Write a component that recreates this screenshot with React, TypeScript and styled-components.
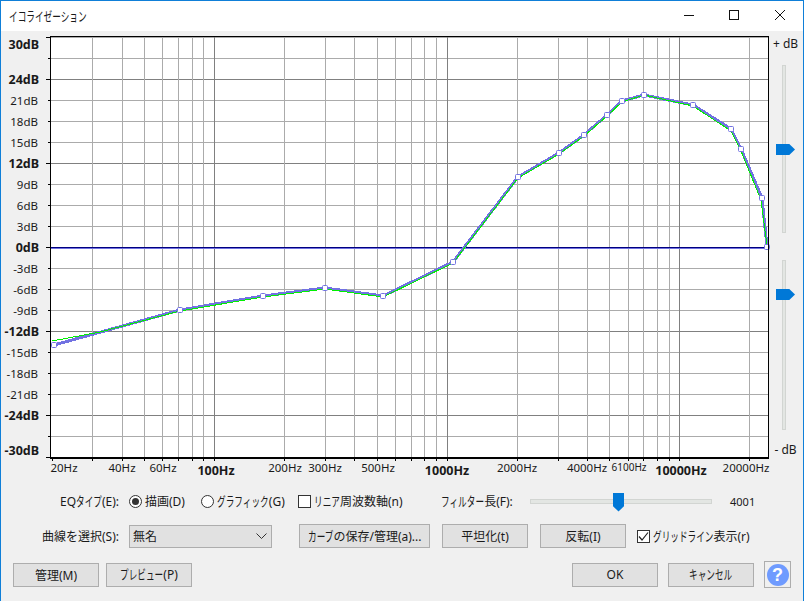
import React from "react";
import styled, { createGlobalStyle } from "styled-components";

const GlobalStyle = createGlobalStyle`
  html, body {
    margin: 0;
    padding: 0;
    background: #f0f0f0;
  }
  * {
    box-sizing: border-box;
  }
`;

const Window = styled.div`
  width: 804px;
  height: 601px;
  display: flex;
  flex-direction: column;
  background: #f0f0f0;
  border: 1px solid #0f7fd8;
  border-bottom: 0;
  overflow: hidden;
  font-family: "Noto Sans", "Noto Sans CJK JP", sans-serif;
  font-size: 12px;
  color: #1a1a1a;
`;

// the dialog font has narrow kana, so kana runs get squeezed horizontally
const Kana = styled.span<{ $n: number }>`
  display: inline-block;
  width: ${(p) => (p.$n * 8.64).toFixed(2)}px;
  font-size: 13px;
  line-height: 1;
  white-space: nowrap;
  transform: scaleX(0.665);
  transform-origin: left center;
`;

const TitleBar = styled.header`
  height: 30px;
  flex: none;
  display: flex;
  align-items: center;
  background: #fff;
`;

const Title = styled.span`
  margin-left: 8px;
  margin-right: auto;
`;

const WinButton = styled.div<{ $w: number }>`
  width: ${(p) => p.$w}px;
  height: 28px;
  align-self: flex-start;
  display: flex;
  align-items: center;
  justify-content: center;
`;

const Main = styled.div`
  flex: none;
  height: 450px;
  display: flex;
`;

const Chart = styled.svg`
  display: block;
  width: 770px;
  height: 450px;
  font-family: "Noto Sans", sans-serif;
`;

const GainColumn = styled.div`
  width: 32px;
  display: flex;
  flex-direction: column;
  align-items: flex-start;
  padding-top: 5px;
`;

const DbLabel = styled.div<{ $mt?: number }>`
  width: 32px;
  height: 16px;
  margin-top: ${(p) => p.$mt ?? 0}px;
  line-height: 16px;
  text-align: center;
  font-size: 12px;
  padding-right: 3px;
`;

const VTrack = styled.div<{ $h: number; $mt: number }>`
  position: relative;
  width: 4px;
  height: ${(p) => p.$h}px;
  margin-top: ${(p) => p.$mt}px;
  margin-left: 11px;
  background: #e3e6e3;
  border: 1px solid #d2d5d2;
`;

const VThumb = styled.div<{ $top: number }>`
  position: absolute;
  left: -7px;
  top: ${(p) => p.$top}px;
  width: 19px;
  height: 11px;
  background: #0078d7;
  clip-path: polygon(0 0, 70% 0, 100% 50%, 70% 100%, 0 100%);
`;

const Row = styled.div<{ $h: number; $mt?: number }>`
  flex: none;
  display: flex;
  align-items: center;
  height: ${(p) => p.$h}px;
  margin-top: ${(p) => p.$mt ?? 0}px;
  white-space: nowrap;
`;

const FieldLabel = styled.div<{ $w: number; $left?: boolean }>`
  flex: none;
  width: ${(p) => p.$w}px;
  text-align: ${(p) => (p.$left ? "left" : "right")};
`;

const Option = styled.label<{ $w?: number; $ml?: number }>`
  flex: none;
  display: flex;
  align-items: center;
  gap: 3px;
  width: ${(p) => (p.$w ? `${p.$w}px` : "auto")};
  margin-left: ${(p) => p.$ml ?? 0}px;
`;

const Radio = styled.input.attrs({ type: "radio", readOnly: true })`
  appearance: none;
  flex: none;
  width: 13px;
  height: 13px;
  margin: 0;
  border: 1px solid #333;
  border-radius: 50%;
  background: #fff;
  display: flex;
  align-items: center;
  justify-content: center;
  &:checked::after {
    content: "";
    width: 7px;
    height: 7px;
    border-radius: 50%;
    background: #333;
  }
`;

const CheckBox = styled.span`
  flex: none;
  width: 13px;
  height: 13px;
  border: 1px solid #333;
  background: #fff;
  display: flex;
  align-items: center;
  justify-content: center;
`;

const HTrack = styled.div`
  position: relative;
  flex: none;
  width: 182px;
  height: 5px;
  background: #e3e6e3;
  border: 1px solid #d2d5d2;
`;

const HThumb = styled.div`
  position: absolute;
  left: 82px;
  top: -7px;
  width: 11px;
  height: 19px;
  background: #0078d7;
  clip-path: polygon(0 0, 100% 0, 100% 72%, 50% 100%, 0 72%);
`;

const Value = styled.div`
  margin-left: 18px;
  font-size: 11px;
`;

const Button = styled.div<{ $w?: number; $ml?: number }>`
  flex: none;
  width: ${(p) => p.$w ?? 86}px;
  height: 24px;
  margin-left: ${(p) => p.$ml ?? 0}px;
  display: flex;
  align-items: center;
  justify-content: center;
  background: #e1e1e1;
  border: 1px solid #adadad;
`;

const Select = styled.div`
  flex: none;
  width: 143px;
  height: 23px;
  margin-left: 10px;
  padding: 0 4px 0 3px;
  display: flex;
  align-items: center;
  justify-content: space-between;
  background: #e1e1e1;
  border: 1px solid #adadad;
`;

const HelpButton = styled.div`
  flex: none;
  width: 27px;
  height: 27px;
  margin-left: 10px;
  margin-right: 12px;
  display: flex;
  align-items: center;
  justify-content: center;
  border: 1px solid #adadad;
  background: #f0f0f0;
`;

const HelpDisc = styled.div`
  width: 22px;
  height: 22px;
  border-radius: 50%;
  background: #6f9bff;
  color: #fff;
  font-family: "Liberation Sans", sans-serif;
  font-weight: 700;
  font-size: 18px;
  line-height: 22px;
  text-align: center;
`;

const Spacer = styled.div`
  margin-left: auto;
`;

const X0 = 51;
const X1 = 768;
const Y0 = 37;
const Y1 = 457;

const xOf = (hz: number) => 52 + Math.log10(hz / 20) * 232.6;
const minorHz = [30, 40, 50, 60, 70, 80, 90, 200, 300, 400, 500, 600, 700, 800, 900, 2000, 3000, 4000, 5000, 6000, 7000, 8000, 9000, 20000];
const majorHz = [100, 1000, 10000];

const dbLevels = Array.from({ length: 21 }, (_, i) => 30 - i * 3);
const yOf = (db: number) => 247 - db * 7;
const majorDb = [24, 12, -12, -24];
const longTickDb = [30, 24, 12, 0, -12, -24, -30];

const dbLabels: { db: number; text: string; bold?: boolean; y?: number }[] = [
  { db: 30, text: "30dB", bold: true, y: 44 },
  { db: 24, text: "24dB", bold: true },
  { db: 21, text: "21dB" },
  { db: 18, text: "18dB" },
  { db: 15, text: "15dB" },
  { db: 12, text: "12dB", bold: true },
  { db: 9, text: "9dB" },
  { db: 6, text: "6dB" },
  { db: 3, text: "3dB" },
  { db: 0, text: "0dB", bold: true },
  { db: -3, text: "-3dB" },
  { db: -6, text: "-6dB" },
  { db: -9, text: "-9dB" },
  { db: -12, text: "-12dB", bold: true },
  { db: -15, text: "-15dB" },
  { db: -18, text: "-18dB" },
  { db: -21, text: "-21dB" },
  { db: -24, text: "-24dB", bold: true },
  { db: -30, text: "-30dB", bold: true, y: 450 },
];

const hzLabels: { x: number; text: string; bold?: boolean; size?: number }[] = [
  { x: 64, text: "20Hz" },
  { x: 122, text: "40Hz" },
  { x: 163, text: "60Hz" },
  { x: 216, text: "100Hz", bold: true },
  { x: 285, text: "200Hz" },
  { x: 325, text: "300Hz" },
  { x: 378, text: "500Hz" },
  { x: 447, text: "1000Hz", bold: true },
  { x: 517, text: "2000Hz" },
  { x: 587, text: "4000Hz" },
  { x: 629, text: "6100Hz", size: 10 },
  { x: 681, text: "10000Hz", bold: true },
  { x: 746, text: "20000Hz" },
];

const points: [number, number][] = [
  [54, 345], [180, 310], [263, 296], [325, 288], [383, 296], [453, 262], [518, 177],
  [559, 153], [584, 135], [607, 115], [622, 101], [644, 95], [693, 105], [731, 129],
  [741, 149], [762, 198], [767, 247],
];

const greenLine: [number, number][] = [
  [52, 341], [100, 332], [180, 311], [263, 297], [325, 289], [383, 297], [453, 263], [518, 178],
  [559, 154], [584, 136], [607, 116], [622, 102], [644, 95], [693, 106], [731, 131],
  [741, 151], [761, 200], [767, 246],
];

const toPath = (pts: [number, number][]) => pts.map(([x, y]) => `${x},${y}`).join(" ");

const EqChart = () => (
  <Chart viewBox="1 31 770 450">
    <rect x={X0} y={Y0} width={X1 - X0} height={Y1 - Y0} fill="#fff" />

    <g shapeRendering="crispEdges" strokeWidth={1}>
      {dbLevels.map((db) => (
        <line
          key={db}
          x1={X0}
          x2={X1}
          y1={yOf(db) + 0.5}
          y2={yOf(db) + 0.5}
          stroke={majorDb.includes(db) ? "#808080" : "#ababab"}
        />
      ))}
      {minorHz.map((hz) => (
        <line key={hz} x1={xOf(hz)} x2={xOf(hz)} y1={Y0} y2={Y1} stroke="#ababab" />
      ))}
      {majorHz.map((hz) => (
        <line key={hz} x1={xOf(hz)} x2={xOf(hz)} y1={Y0} y2={Y1} stroke="#808080" />
      ))}
    </g>

    <g shapeRendering="crispEdges" fill="none">
      <line x1={X0} x2={X1} y1={247.5} y2={247.5} stroke="#00007f" />
      <line x1={X0} x2={X1} y1={248.5} y2={248.5} stroke="#7070e0" />
      <polyline points={toPath(points)} stroke="#7272e2" strokeWidth={3} />
      <polyline points={toPath(greenLine)} stroke="#00f000" strokeWidth={1} />
    </g>

    {points.map(([x, y]) => (
      <rect
        key={x}
        x={x - 2.5}
        y={y - 2.5}
        width={5}
        height={5}
        rx={1}
        fill="#fff"
        stroke="#7272e2"
        strokeWidth={1}
      />
    ))}

    <rect
      x={X0 - 0.5}
      y={36.5}
      width={X1 - X0 + 1}
      height={Y1 - 36 + 0.5}
      fill="none"
      stroke="#000"
      strokeWidth={1.5}
      shapeRendering="crispEdges"
    />

    <g shapeRendering="crispEdges" stroke="#000">
      {dbLevels.map((db) => (
        <line
          key={db}
          x1={longTickDb.includes(db) ? 46 : 48}
          x2={50}
          y1={yOf(db) + 0.5}
          y2={yOf(db) + 0.5}
        />
      ))}
      {[52, ...minorHz.filter((hz) => hz < 20000).map(xOf), ...majorHz.map(xOf), xOf(20000)].map((x) => (
        <line key={x} x1={x} x2={x} y1={458} y2={461} />
      ))}
    </g>

    {dbLabels.map(({ db, text, bold, y }) => (
      <text
        key={db}
        x={bold ? 39 : 38}
        y={(y ?? yOf(db)) + 0.3}
        textAnchor="end"
        dominantBaseline="central"
        fontSize={bold ? 12.5 : 11.5}
        fontWeight={bold ? 700 : 400}
        fill="#1a1a1a"
      >
        {text}
      </text>
    ))}
    {hzLabels.map(({ x, text, bold, size }) => (
      <text
        key={text}
        x={x}
        y={bold ? 470.5 : size ? 467 : 467.5}
        textAnchor="middle"
        dominantBaseline="central"
        fontSize={bold ? 12.5 : size ?? 11.5}
        fontWeight={bold ? 700 : 400}
        fill="#1a1a1a"
      >
        {text}
      </text>
    ))}
  </Chart>
);

const App = () => (
  <>
    <GlobalStyle />
    <Window>
      <TitleBar>
        <Title>
          <Kana $n={9}>イコライゼーション</Kana>
        </Title>
        <WinButton $w={44}>
          <svg width="10" height="10" viewBox="0 0 10 10">
            <path d="M0 5.5H10" stroke="#111" fill="none" />
          </svg>
        </WinButton>
        <WinButton $w={46}>
          <svg width="10" height="10" viewBox="0 0 10 10">
            <rect x="0.5" y="0.5" width="9" height="9" stroke="#111" fill="none" />
          </svg>
        </WinButton>
        <WinButton $w={46}>
          <svg width="10" height="10" viewBox="0 0 10 10">
            <path d="M0 0L10 10M10 0L0 10" stroke="#111" fill="none" />
          </svg>
        </WinButton>
      </TitleBar>

      <Main>
        <EqChart />
        <GainColumn>
          <DbLabel>+ dB</DbLabel>
          <VTrack $h={168} $mt={13}>
            <VThumb $top={78} />
          </VTrack>
          <VTrack $h={170} $mt={27}>
            <VThumb $top={28} />
          </VTrack>
          <DbLabel $mt={12}>- dB</DbLabel>
        </GainColumn>
      </Main>

      <Row $h={40}>
        <FieldLabel $w={118}>
          EQ<Kana $n={3}>タイプ</Kana>(E):
        </FieldLabel>
        <Option $w={72} $ml={10}>
          <Radio checked name="eqtype" />
          <span>描画(D)</span>
        </Option>
        <Option $w={97}>
          <Radio name="eqtype" />
          <span>
            <Kana $n={6}>グラフィック</Kana>(G)
          </span>
        </Option>
        <Option $w={143}>
          <CheckBox />
          <span>
            <Kana $n={3}>リニア</Kana>周波数軸(n)
          </span>
        </Option>
        <FieldLabel $w={89} $left>
          <Kana $n={5}>フィルター</Kana>長(F):
        </FieldLabel>
        <HTrack>
          <HThumb />
        </HTrack>
        <Value>4001</Value>
      </Row>

      <Row $h={24} $mt={3}>
        <FieldLabel $w={118}>曲線を選択(S):</FieldLabel>
        <Select>
          無名
          <svg width="11" height="7" viewBox="0 0 11 7">
            <path d="M0.5 0.5L5.5 5.5L10.5 0.5" stroke="#333" fill="none" />
          </svg>
        </Select>
        <Button $w={131} $ml={27}>
          <span>
            <Kana $n={3}>カーブ</Kana>の保存/管理(a)...
          </span>
        </Button>
        <Button $ml={12}>平坦化(t)</Button>
        <Button $ml={12}>反転(I)</Button>
        <Option $ml={11}>
          <CheckBox>
            <svg width="11" height="11" viewBox="0 0 11 11">
              <path d="M1 5.5L4 9L10 1.5" stroke="#222" strokeWidth="1.2" fill="none" />
            </svg>
          </CheckBox>
          <span>
            <Kana $n={7}>グリッドライン</Kana>表示(r)
          </span>
        </Option>
      </Row>

      <Row $h={27} $mt={13}>
        <Button $ml={12}>管理(M)</Button>
        <Button $ml={7}>
          <span>
            <Kana $n={5}>プレビュー</Kana>(P)
          </span>
        </Button>
        <Spacer />
        <Button>OK</Button>
        <Button $ml={10}>
          <Kana $n={5}>キャンセル</Kana>
        </Button>
        <HelpButton>
          <HelpDisc>?</HelpDisc>
        </HelpButton>
      </Row>
    </Window>
  </>
);

export default App;
